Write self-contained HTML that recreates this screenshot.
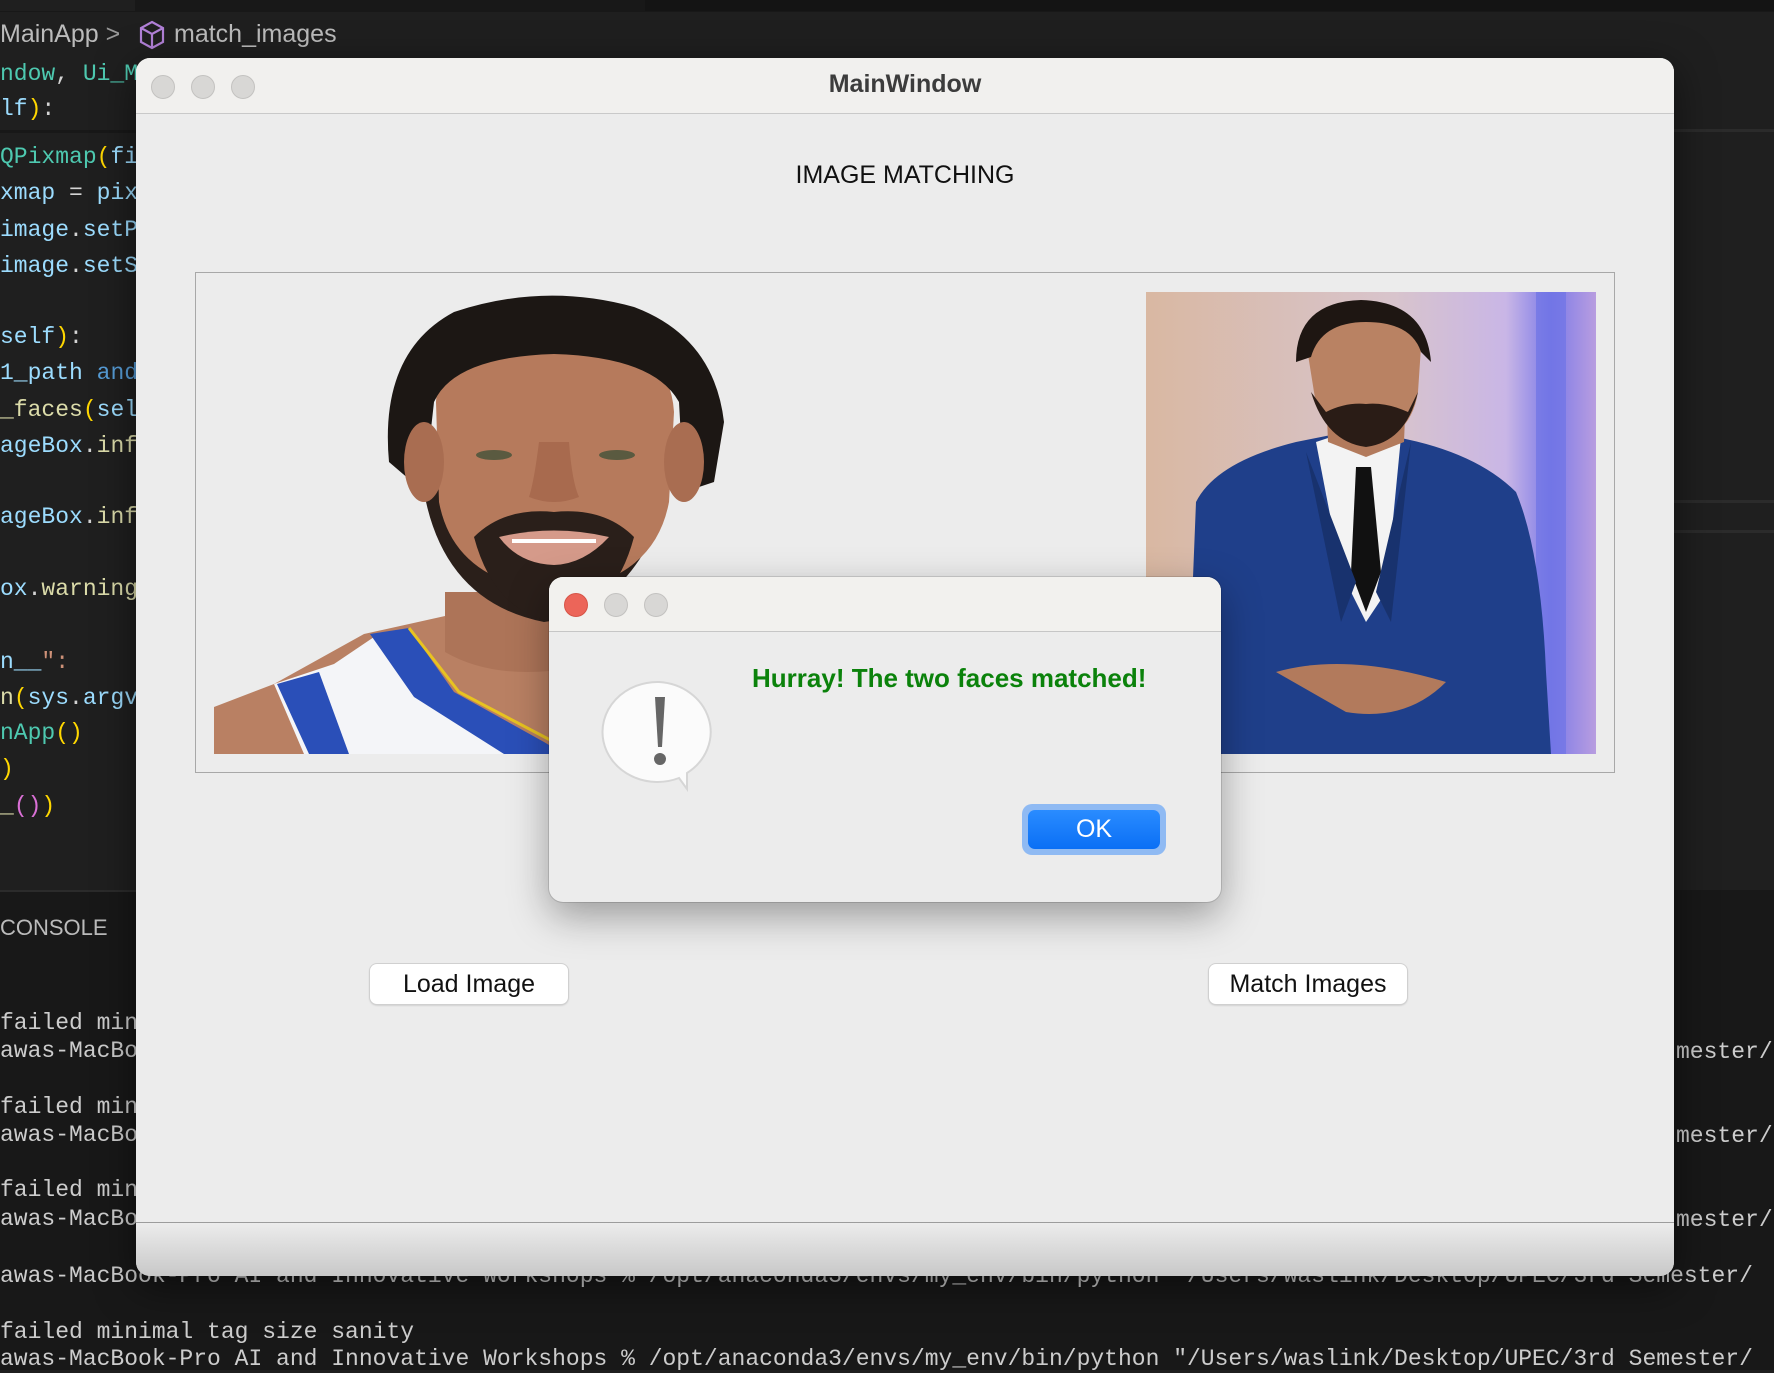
<!DOCTYPE html>
<html><head><meta charset="utf-8"><style>
*{margin:0;padding:0;box-sizing:border-box}
body{width:1774px;height:1370px;background:#1f1f1f;position:relative;overflow:hidden;font-family:"Liberation Sans",sans-serif}
.a{position:absolute;white-space:pre}
.code{font-family:"Liberation Mono",monospace;font-size:23px;color:#d4d4d4;line-height:28px}
.t{font-family:"Liberation Mono",monospace;font-size:23px;color:#cccccc;line-height:28px}
.b{color:#9cdcfe}.c{color:#4ec9b0}.y{color:#ffd700}.f{color:#dcdcaa}.k{color:#569cd6}.m{color:#da70d6}.s{color:#ce9178}
.dot{position:absolute;width:24px;height:24px;border-radius:50%;background:#d8d7d5;border:1px solid #c3c2c0}
.btn{position:absolute;background:#fff;border-radius:7px;box-shadow:0 0 0 1px #d0d0d0,0 1px 2px rgba(0,0,0,.25);font-size:25px;color:#111;text-align:center}
</style></head><body>
<div class="a" style="left:0;top:0;width:1774px;height:12px;background:#181818"></div>
<div class="a" style="left:0;top:0;width:135px;height:11px;background:#1f1f1f"></div>
<div class="a" style="left:645px;top:0;width:1129px;height:11px;background:#141414"></div>
<div class="a" style="left:0;top:12px;width:1774px;height:118px;background:#1f1f1f"></div>
<div class="a" style="left:1674px;top:129px;width:100px;height:3px;background:#2b2b2b"></div>
<div class="a" style="left:0;top:130px;width:136px;height:3px;background:#181818"></div>
<div class="a" style="left:0;top:890px;width:1774px;height:480px;background:#181818"></div>
<div class="a" style="left:1674px;top:500px;width:100px;height:3px;background:#2b2b2b"></div>
<div class="a" style="left:1674px;top:530px;width:100px;height:3px;background:#2b2b2b"></div>
<div class="a" style="left:0;top:890px;width:136px;height:2px;background:#2b2b2b"></div>

<div class="a" style="left:0;top:20px;font-size:25px;color:#bbb">MainApp <span style="color:#999">&gt;</span></div>
<svg class="a" style="left:138px;top:20px" width="28" height="30" viewBox="0 0 28 30"><path d="M14 2 L25 8 L25 22 L14 28 L3 22 L3 8 Z M3 8 L14 14 L25 8 M14 14 L14 28" fill="none" stroke="#b180d7" stroke-width="2.2"/></svg>
<div class="a" style="left:174px;top:20px;font-size:25px;color:#bbb">match_images</div>

<div class="a code" style="left:0;top:60px"><span class="c">ndow</span>, <span class="c">Ui_M</span></div>
<div class="a code" style="left:0;top:95px"><span class="b">lf</span><span class="y">)</span>:</div>
<div class="a code" style="left:0;top:143px"><span class="c">QPixmap</span><span class="y">(</span><span class="b">fi</span></div>
<div class="a code" style="left:0;top:179px"><span class="b">xmap</span> = <span class="b">pix</span></div>
<div class="a code" style="left:0;top:216px"><span class="b">image</span>.<span class="b">setP</span></div>
<div class="a code" style="left:0;top:252px"><span class="b">image</span>.<span class="b">setS</span></div>
<div class="a code" style="left:0;top:323px"><span class="b">self</span><span class="y">)</span>:</div>
<div class="a code" style="left:0;top:359px"><span class="b">1_path</span> <span class="k">and</span></div>
<div class="a code" style="left:0;top:396px"><span class="f">_faces</span><span class="y">(</span><span class="b">sel</span></div>
<div class="a code" style="left:0;top:432px"><span class="b">ageBox</span>.<span class="f">inf</span></div>
<div class="a code" style="left:0;top:503px"><span class="b">ageBox</span>.<span class="f">inf</span></div>
<div class="a code" style="left:0;top:575px"><span class="b">ox</span>.<span class="f">warning</span></div>
<div class="a code" style="left:0;top:648px"><span class="b">n__</span><span class="s">":</span></div>
<div class="a code" style="left:0;top:684px"><span class="f">n</span><span class="y">(</span><span class="b">sys</span>.<span class="b">argv</span></div>
<div class="a code" style="left:0;top:719px"><span class="c">nApp</span><span class="y">()</span></div>
<div class="a code" style="left:0;top:755px"><span class="y">)</span></div>
<div class="a code" style="left:0;top:792px"><span class="f">_</span><span class="m">()</span><span class="y">)</span></div>
<div class="a" style="left:0;top:915px;font-size:22px;color:#bbb">CONSOLE</div>

<div class="a t" style="left:0;top:1009px">failed min</div>
<div class="a t" style="left:0;top:1037px">awas-MacBoo</div>
<div class="a t" style="left:0;top:1093px">failed min</div>
<div class="a t" style="left:0;top:1121px">awas-MacBoo</div>
<div class="a t" style="left:0;top:1176px">failed min</div>
<div class="a t" style="left:0;top:1205px">awas-MacBoo</div>
<div class="a t" style="left:0;top:1262px">awas-MacBook-Pro AI and Innovative Workshops % /opt/anaconda3/envs/my_env/bin/python "/Users/waslink/Desktop/UPEC/3rd Semester/</div>
<div class="a t" style="left:0;top:1318px">failed minimal tag size sanity</div>
<div class="a t" style="left:0;top:1345px">awas-MacBook-Pro AI and Innovative Workshops % /opt/anaconda3/envs/my_env/bin/python "/Users/waslink/Desktop/UPEC/3rd Semester/</div>
<div class="a t" style="left:1676px;top:1038px">mester/</div>
<div class="a t" style="left:1676px;top:1122px">mester/</div>
<div class="a t" style="left:1676px;top:1206px">mester/</div>

<!-- main window -->
<div class="a" style="left:136px;top:58px;width:1538px;height:1218px;background:#ececec;border-radius:14px;overflow:hidden;box-shadow:0 10px 40px rgba(0,0,0,.5)">
  <div class="a" style="left:0;top:0;width:1538px;height:56px;background:#f1f0ee;border-bottom:1px solid #c9c9c9"></div>
  <div class="dot" style="left:15px;top:17px"></div>
  <div class="dot" style="left:55px;top:17px"></div>
  <div class="dot" style="left:95px;top:17px"></div>
  <div class="a" style="left:0;top:12px;width:1538px;text-align:center;font-size:25px;font-weight:bold;color:#3c3c3c">MainWindow</div>
  <div class="a" style="left:0;top:103px;width:1538px;text-align:center;font-size:25px;color:#111">IMAGE MATCHING</div>
  <div class="a" style="left:59px;top:214px;width:1420px;height:501px;border:1px solid #a8a8a8"></div>
  <!-- left photo -->
  <svg class="a" style="left:78px;top:234px" width="520" height="462" viewBox="0 0 520 462">
    <path d="M0 415 L60 392 L150 342 L240 322 L330 330 L420 360 L520 400 L520 462 L0 462Z" fill="#b98063"/>
    <path d="M60 392 L120 372 L160 345 L230 420 L300 462 L90 462Z" fill="#f4f5f8"/>
    <path d="M63 392 L105 380 L135 462 L95 462Z" fill="#2a4fb8"/>
    <path d="M156 342 L195 336 L240 400 L330 450 L350 462 L290 462 L200 405Z" fill="#2a4fb8"/>
    <path d="M195 336 L245 400 L340 450" stroke="#e8c320" stroke-width="3" fill="none"/>
    <path d="M231 300 L231 360 Q300 400 420 360 L430 300Z" fill="#ad7458"/>
    <path d="M210 200 Q230 310 330 330 Q410 320 450 220 L440 190 L220 190Z" fill="#2a1f1a"/>
    <path d="M222 110 Q225 40 340 40 Q455 40 460 120 L455 210 Q440 290 340 300 Q240 290 225 210Z" fill="#b67a5c"/>
    <path d="M175 170 Q165 60 240 20 Q330 -10 420 15 Q500 45 510 130 L500 190 L470 200 L465 110 Q440 65 340 62 Q240 65 220 110 L210 200Z" fill="#1c1714"/>
    <ellipse cx="210" cy="170" rx="20" ry="40" fill="#a96d51"/>
    <ellipse cx="470" cy="170" rx="20" ry="40" fill="#a96d51"/>
    <path d="M260 245 Q290 215 340 220 Q390 215 420 245 Q400 320 340 330 Q280 320 260 245Z" fill="#2a1f1a"/>
    <path d="M285 245 Q340 232 395 245 Q370 272 340 273 Q305 272 285 245Z" fill="#d59a8a"/>
    <path d="M298 249 L382 249" stroke="#fff" stroke-width="4"/>
    <ellipse cx="280" cy="163" rx="18" ry="5" fill="#5a5a40"/><ellipse cx="403" cy="163" rx="18" ry="5" fill="#5a5a40"/>
    <path d="M325 150 Q320 190 315 205 Q340 215 365 205 Q358 190 355 150" fill="#a86a4e"/>
  </svg>
  <!-- right photo -->
  <svg class="a" style="left:1010px;top:234px" width="450" height="462" viewBox="0 0 450 462">
    <defs><linearGradient id="bg" x1="0" x2="1"><stop offset="0" stop-color="#d9b8a2"/><stop offset=".55" stop-color="#d8c4cc"/><stop offset=".8" stop-color="#c9b6e6"/><stop offset=".9" stop-color="#7d7be8"/><stop offset="1" stop-color="#b89de0"/></linearGradient></defs>
    <rect width="450" height="462" fill="url(#bg)"/>
    <rect x="390" y="0" width="30" height="462" fill="#6d74e6" opacity=".7"/>
    <path d="M40 462 L50 210 Q70 170 150 150 L200 140 L250 145 Q330 160 370 200 Q395 260 400 380 L405 462Z" fill="#1f3f8a"/>
    <path d="M170 150 L200 140 L255 145 L240 300 L220 330 L195 280Z" fill="#f3f3f3"/>
    <path d="M210 175 L225 175 L235 280 L220 320 L205 280Z" fill="#111"/>
    <path d="M160 160 L210 290 L195 330Z M265 150 L230 300 L245 330Z" fill="#18326e"/>
    <path d="M180 100 L260 100 L258 150 L220 165 L182 150Z" fill="#b27a5c"/>
    <path d="M160 50 Q170 15 220 15 Q270 15 275 55 L272 100 Q265 145 220 155 Q175 145 168 100Z" fill="#b98263"/>
    <path d="M165 100 Q180 150 220 155 Q260 150 272 100 L262 120 Q240 110 220 112 Q200 110 180 120Z" fill="#2a1c16"/>
    <path d="M150 70 Q150 10 215 8 Q280 10 285 70 L275 60 Q265 30 220 30 Q175 30 165 65Z" fill="#1e1612"/>
    <path d="M130 380 Q200 360 300 390 Q260 430 200 420Z" fill="#b27a5c"/>
  </svg>
  <div class="btn" style="left:234px;top:906px;width:198px;height:40px;line-height:40px">Load Image</div>
  <div class="btn" style="left:1073px;top:906px;width:198px;height:40px;line-height:40px">Match Images</div>
  <div class="a" style="left:0;top:1164px;width:1538px;height:54px;background:linear-gradient(#ececec,#c8c8c8);border-top:1px solid #9c9c9c"></div>
</div>

<!-- dialog -->
<div class="a" style="left:549px;top:577px;width:672px;height:325px;background:#ececec;border-radius:14px;overflow:hidden;box-shadow:0 14px 40px rgba(0,0,0,.35),0 0 0 1px rgba(0,0,0,.12)">
  <div class="a" style="left:0;top:0;width:672px;height:55px;background:#f2f1ee;border-bottom:1px solid #c6c6c6"></div>
  <div class="dot" style="left:15px;top:16px;background:#ec6559;border-color:#d65447"></div>
  <div class="dot" style="left:55px;top:16px"></div>
  <div class="dot" style="left:95px;top:16px"></div>
  <svg class="a" style="left:52px;top:100px" width="120" height="115" viewBox="0 0 120 115">
    <path d="M58 5 A55 50 0 1 0 78 101 L86 112 L86 96 A55 50 0 0 0 58 5Z" fill="#fbfbfb" stroke="#d6d6d6" stroke-width="2"/>
    <path d="M54 20 L64 20 L61 70 L57 70Z" fill="#666"/>
    <circle cx="59" cy="82" r="6" fill="#666"/>
  </svg>
  <div class="a" style="left:203px;top:86px;font-size:26px;font-weight:bold;color:#0b820b">Hurray! The two faces matched!</div>
  <div class="a" style="left:473px;top:227px;width:144px;height:51px;border-radius:10px;background:#8fbaf3"></div>
  <div class="a" style="left:479px;top:233px;width:132px;height:39px;border-radius:7px;background:linear-gradient(#2a8cff,#0a6ff5);color:#fff;font-size:25px;line-height:39px;text-align:center">OK</div>
</div>
</body></html>
